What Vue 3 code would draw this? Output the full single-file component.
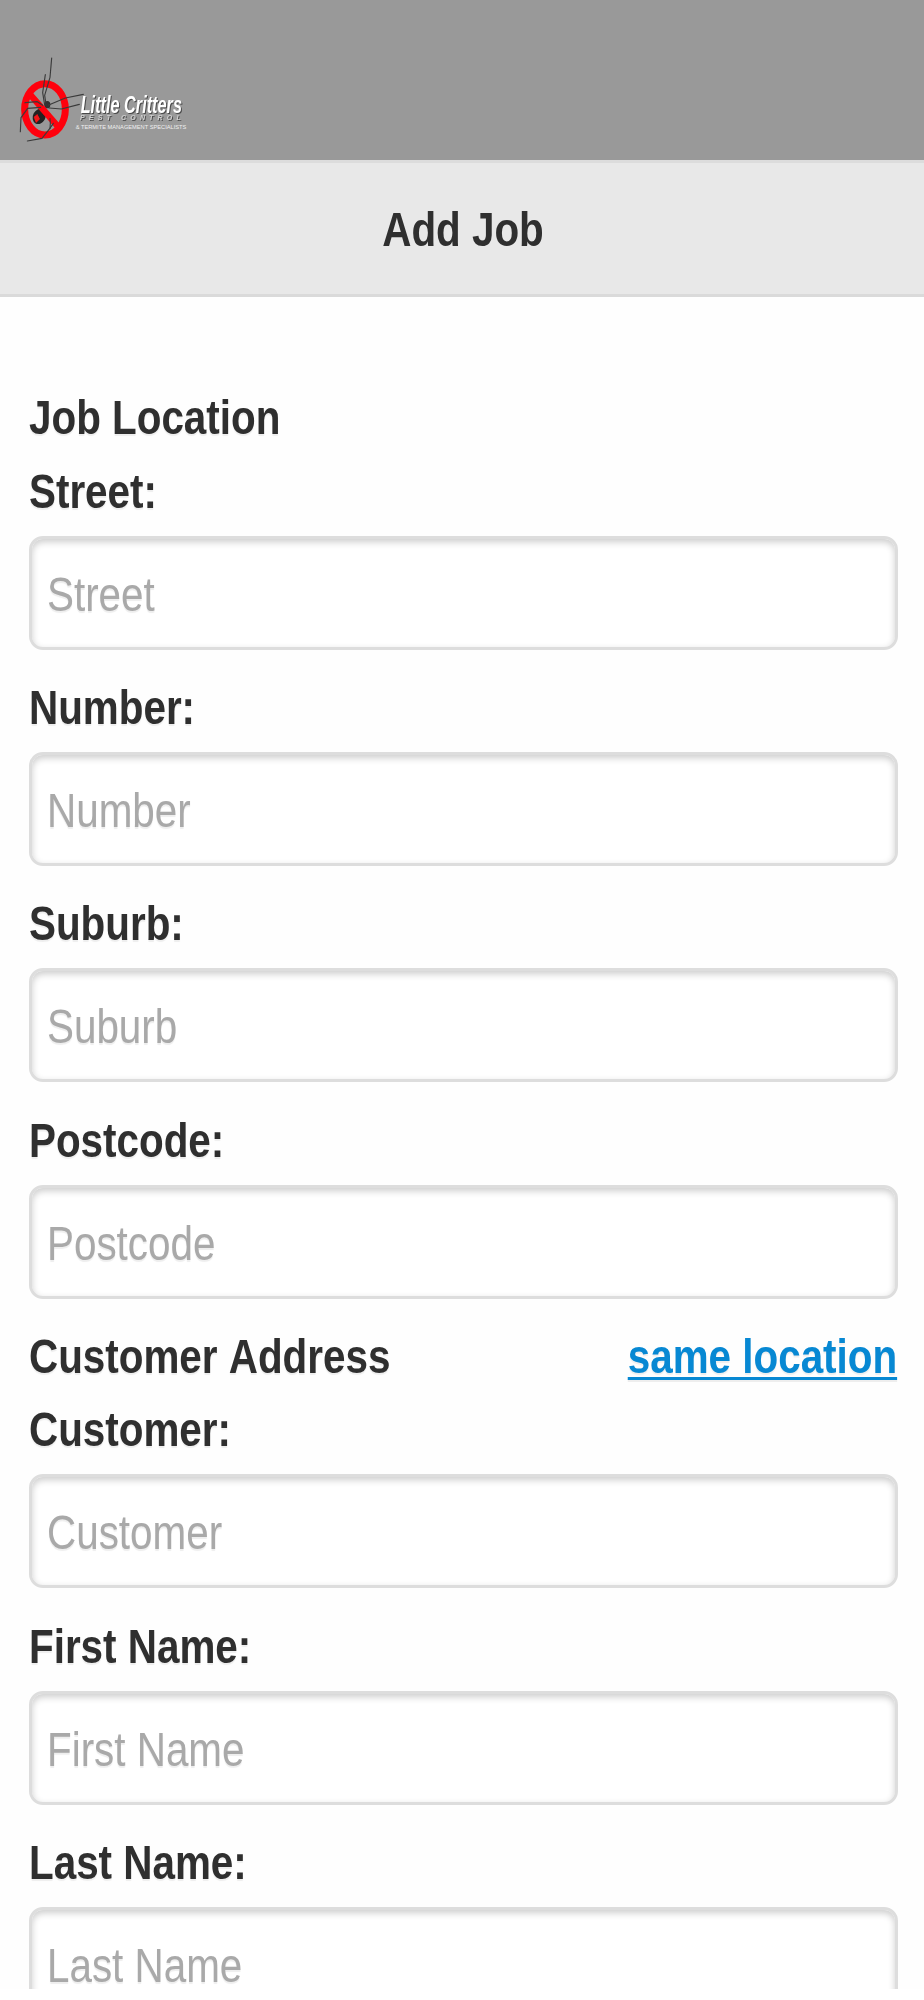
<script setup>
const jobFields = ['Street', 'Number', 'Suburb', 'Postcode']
const customerFields = ['Customer', 'First Name', 'Last Name']
</script>

<template>
  <div class="page">
    <header class="brand">
      <svg class="logo" width="220" height="130" viewBox="0 0 660 390" role="img" aria-label="Little Critters Pest Control">
        <defs>
          <filter id="soft" x="-10%" y="-10%" width="120%" height="120%">
            <feGaussianBlur stdDeviation="1.1" />
          </filter>
        </defs>
        <g filter="url(#soft)">
          <ellipse cx="135" cy="208" rx="61" ry="77" stroke-width="21" fill="none" stroke="#ff0008" />
          <ellipse cx="118" cy="229" rx="19" ry="24" fill="#202020" transform="rotate(28 118 229)" />
          <path d="M101 231 L112 222 L120 237 L108 249 Z" fill="#f11218" />
          <ellipse cx="142" cy="194" rx="9" ry="11" fill="#303030" />
          <path d="M90 163 L176 262" fill="none" stroke="#ff0008" stroke-width="19" />
          <g fill="none" stroke="#3a3a3a" stroke-width="3.4" stroke-linecap="round" stroke-linejoin="round">
            <path d="M138 193 L134 166 L150 112 L155 54" />
            <path d="M134 195 L128 158 L136 104" />
            <path d="M146 195 L196 174 L250 163" />
            <path d="M148 204 L184 207 L238 193" />
            <path d="M128 196 L112 185 L75 188" />
            <path d="M122 202 L83 205 L63 233 L61 275" />
            <path d="M150 236 L151 250 L150 266" />
            <path d="M160 250 L149 266 L126 295 L82 303" />
          </g>
        </g>
        <g class="wordmark">
          <text x="242" y="219" font-size="69" font-style="italic" font-weight="700" textLength="304" lengthAdjust="spacingAndGlyphs">Little Critters</text>
          <text x="240" y="239" font-size="21" font-style="italic" font-weight="700" fill="#cfcfcf" textLength="302">PEST CONTROL</text>
        </g>
        <text x="227" y="266" font-size="18" fill="#f0f0f0" textLength="332" lengthAdjust="spacingAndGlyphs">&amp; TERMITE MANAGEMENT SPECIALISTS</text>
      </svg>
    </header>

    <div class="titlebar"><h1 class="narrow">Add Job</h1></div>

    <form class="form" @submit.prevent>
      <div class="heading"><h2 class="narrow left">Job Location</h2></div>
      <div v-for="name in jobFields" :key="name" class="group">
        <label class="narrow left" :for="name">{{ name }}:</label>
        <div class="box"><input :id="name" class="narrow left" type="text" :placeholder="name"></div>
      </div>

      <div class="heading">
        <h2 class="narrow left">Customer Address</h2>
        <a class="narrow right" href="#">same location</a>
      </div>
      <div v-for="name in customerFields" :key="name" class="group">
        <label class="narrow left" :for="name">{{ name }}:</label>
        <div class="box"><input :id="name" class="narrow left" type="text" :placeholder="name"></div>
      </div>
    </form>
  </div>
</template>

<style>
body { background: #fff; overflow: hidden; }
</style>

<style scoped>
.page {
  width: 924px;
  height: 1989px;
  overflow: hidden;
  box-sizing: border-box;
  background: #fefefe;
  font-family: "Liberation Sans", Arial, Helvetica, sans-serif;
  font-size: 48px;
  font-kerning: none;
  color: #2f2f2f;
}
.brand {
  height: 160px;
  box-sizing: border-box;
  padding-top: 40px;
  background: #999;
  overflow: hidden;
}
.logo { display: block; }
.wordmark { fill: #fff; filter: drop-shadow(3px 3px 1.5px #4a4a4a); }
.titlebar {
  height: 137px;
  box-sizing: border-box;
  border-top: 3px solid #dcdcdc;
  border-bottom: 3px solid #dadada;
  background: #e8e8e8;
  display: flex;
  justify-content: center;
}
h1, h2 { margin: 0; font-size: 48px; font-weight: 700; white-space: nowrap; }
h1 { line-height: 134px; height: 131px; margin-left: 1px; }
.narrow { transform: scaleX(0.8415); }
.left { transform-origin: left center; }
.right { transform-origin: right center; }
.form { padding: 83.4px 26.5px 0 28.5px; text-shadow: 0 2px 1px #eee; }
.heading {
  display: flex;
  justify-content: space-between;
  height: 73.4px;
  line-height: 75px;
}
a {
  color: #0788d3;
  font-weight: 700;
  white-space: nowrap;
  text-decoration: underline;
  text-decoration-thickness: 3px;
  text-underline-offset: 4px;
  text-decoration-skip-ink: none;
}
.group { margin-bottom: 20.3px; }
label {
  display: block;
  height: 82px;
  line-height: 75px;
  font-weight: 700;
  white-space: nowrap;
}
.box {
  height: 114px;
  box-sizing: border-box;
  border: 3px solid #dddddd;
  border-radius: 14px;
  background: #fff;
  box-shadow: inset 0 3px 7px rgba(0, 0, 0, 0.2);
  overflow: hidden;
}
input {
  display: block;
  width: 100%;
  height: 108px;
  box-sizing: border-box;
  margin: 0 0 0 15px;
  padding: 3px 0 0;
  border: 0;
  outline: 0;
  background: transparent;
  font: inherit;
  font-kerning: none;
  color: #2f2f2f;
  text-shadow: inherit;
}
input::placeholder { color: #a9a9a9; opacity: 1; }
</style>
